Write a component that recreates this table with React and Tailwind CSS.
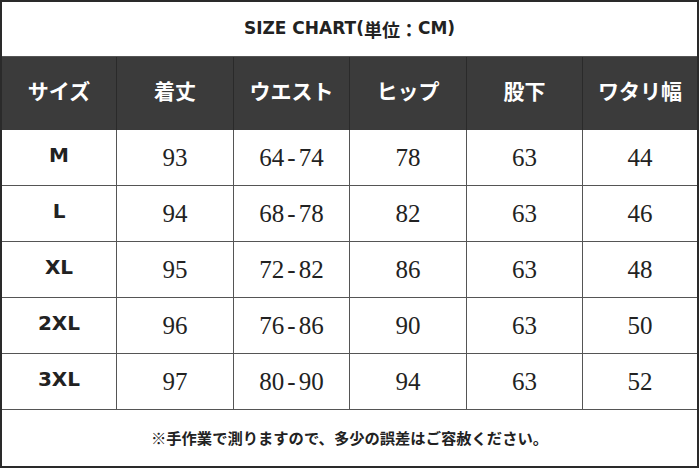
import React from "react";

const headers = ["サイズ", "着丈", "ウエスト", "ヒップ", "股下", "ワタリ幅"];
const rows = [
  ["M", "93", "64-74", "78", "63", "44"],
  ["L", "94", "68-78", "82", "63", "46"],
  ["XL", "95", "72-82", "86", "63", "48"],
  ["2XL", "96", "76-86", "90", "63", "50"],
  ["3XL", "97", "80-90", "94", "63", "52"],
];
const cols = "grid grid-cols-[115px_117px_116px_117px_116px_1fr]";
const sans = "font-['Noto_Sans_CJK_JP','Noto_Sans',sans-serif]";
const latin = "font-['DejaVu_Sans','Noto_Sans_CJK_JP',sans-serif]";

function Num({ v }) {
  const parts = v.split("-");
  if (parts.length === 1) return <>{v}</>;
  return (
    <>
      {parts[0]}
      <span className="px-[3px]">-</span>
      {parts[1]}
    </>
  );
}

export default function App() {
  return (
    <div className="w-[700px] h-[468px] bg-white">
      <div className="w-[699px] h-[468px] border-2 border-[#2a2a2a] flex flex-col">
        <div className={`h-[55px] border-b border-[#555] flex items-center justify-center text-[17px] font-bold text-[#222] ${latin}`}>
          <span>SIZE CHART(</span>
          <span className={sans + " text-[18px]"}>単位：</span>
          <span>CM)</span>
        </div>
        <div className={`${cols} h-[73px] bg-[#3b3b3b]`}>
          {headers.map((h, i) => (
            <div
              key={i}
              className={`flex items-center justify-center text-white text-[21px] font-bold ${sans} ${i < 5 ? "border-r border-[#2a2a2a]" : ""}`}
            >
              <span className="-mt-[6px]">{h}</span>
            </div>
          ))}
        </div>
        {rows.map((r, ri) => (
          <div key={ri} className={`${cols} h-[56px] border-b border-[#555]`}>
            {r.map((c, ci) => (
              <div
                key={ci}
                className={`flex items-center justify-center text-[#222] ${ci < 5 ? "border-r border-[#555]" : ""}`}
              >
                {ci === 0 ? (
                  <span className={`-mt-[6px] text-[20px] font-bold ${latin}`}>{c}</span>
                ) : (
                  <span className="text-[25px] font-['Liberation_Serif',serif]">
                    <Num v={c} />
                  </span>
                )}
              </div>
            ))}
          </div>
        ))}
        <div className={`flex-1 flex items-center justify-center text-[15.3px] font-bold text-[#222] ${sans}`}>
          <span className="-mt-[2px]">※手作業で測りますので、多少の誤差はご容赦ください。</span>
        </div>
      </div>
    </div>
  );
}
